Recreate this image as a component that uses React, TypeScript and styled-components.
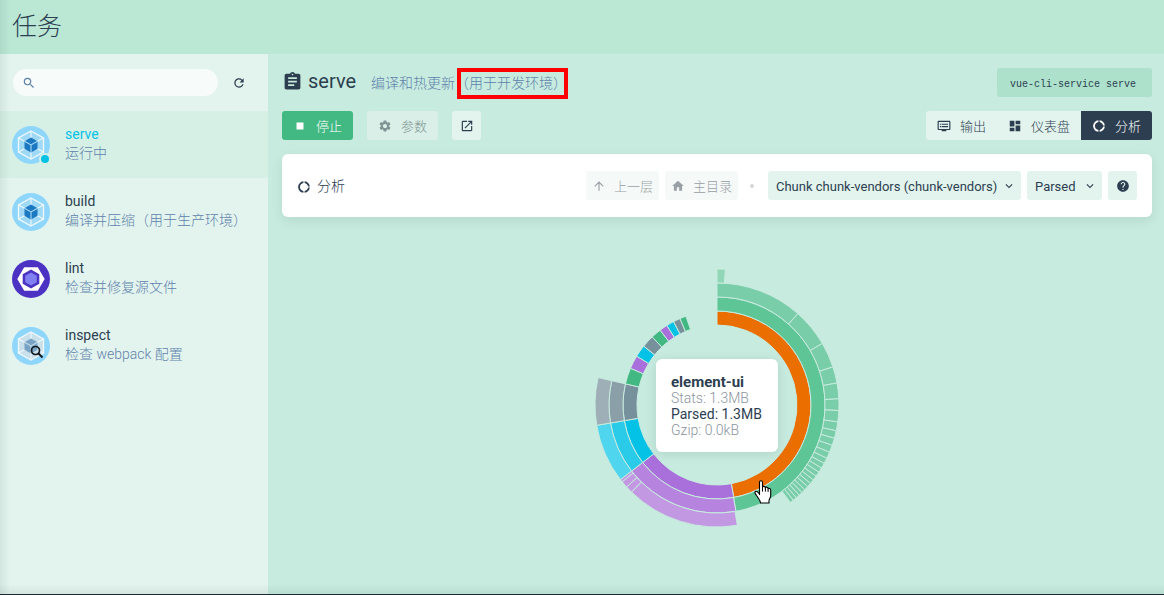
import React from 'react';
import styled, { createGlobalStyle, css } from 'styled-components';
import {
  MdArrowUpward,
  MdAssignment,
  MdDashboard,
  MdDonutLarge,
  MdDvr,
  MdHelp,
  MdHome,
  MdKeyboardArrowDown,
  MdOpenInNew,
  MdRefresh,
  MdSearch,
  MdSettings,
  MdStop,
} from 'react-icons/md';

const color = {
  bg: '#c7ebdf',
  header: '#bbe7d5',
  sidebar: '#e3f4ee',
  selected: '#d7f0e6',
  code: '#ade1cb',
  dark: '#2c3e50',
  muted: '#5f82ac',
  primary: '#42b983',
  accent: '#03c2e6',
};

const GlobalStyle = createGlobalStyle`
  *, *::before, *::after { box-sizing: border-box; }
  body {
    margin: 0;
    background: ${color.bg};
    color: ${color.dark};
    font-family: Roboto, "Noto Sans CJK SC", sans-serif;
    font-size: 14px;
    font-weight: 300;
    line-height: 19px;
  }
  button, input, select { font: inherit; color: inherit; }
`;

const Page = styled.div`
  position: relative;
  display: flex;
  flex-direction: column;
  min-height: 100vh;
  border-bottom: 1px solid #1d2935;

  &::after {
    content: '';
    position: absolute;
    inset: 0;
    pointer-events: none;
    background:
      linear-gradient(to right, rgba(0, 40, 30, 0.07), transparent) left / 10px 100% no-repeat,
      linear-gradient(to top, rgba(0, 40, 30, 0.07), transparent) bottom / 100% 10px no-repeat;
  }
`;

const Header = styled.header`
  height: 54px;
  padding: 0 12px;
  background: ${color.header};
`;

const Title = styled.h1`
  margin: 0;
  font-size: 25px;
  font-weight: 300;
  line-height: 54px;
`;

const Body = styled.div`
  display: flex;
  flex: 1;
`;

const Sidebar = styled.aside`
  flex: 0 0 268px;
  min-width: 0;
  background: ${color.sidebar};
`;

const SearchRow = styled.form`
  display: flex;
  align-items: center;
  gap: 10px;
  height: 57px;
  padding: 0 18px 0 13px;
`;

const SearchField = styled.label`
  display: flex;
  align-items: center;
  flex: 1;
  gap: 6px;
  min-width: 0;
  height: 27px;
  padding: 0 9px;
  border-radius: 14px;
  background: #f7fbfa;
  color: ${color.muted};

  svg { width: 14px; height: 14px; }
`;

const SearchInput = styled.input`
  flex: 1;
  min-width: 0;
  border: 0;
  outline: 0;
  background: transparent;
`;

const RefreshButton = styled.button`
  display: grid;
  place-items: center;
  width: 22px;
  height: 28px;
  padding: 0;
  border: 0;
  background: none;

  svg { width: 14px; height: 14px; }
`;

const TaskList = styled.ul`
  margin: 0;
  padding: 0;
  list-style: none;
`;

const TaskLink = styled.a<{ $active?: boolean }>`
  display: flex;
  align-items: center;
  gap: 15px;
  height: 67px;
  padding: 0 12px;
  color: inherit;
  text-decoration: none;
  background: ${(p) => (p.$active ? color.selected : 'transparent')};
`;

const TaskIcon = styled.span`
  position: relative;
  width: 38px;
  height: 38px;

  svg { display: block; }
`;

const RunningDot = styled.span`
  position: absolute;
  right: -1px;
  bottom: -1px;
  width: 12px;
  height: 12px;
  border: 2px solid ${color.selected};
  border-radius: 50%;
  background: ${color.accent};
`;

const TaskText = styled.span`
  display: flex;
  flex-direction: column;
  padding-bottom: 2px;
`;

const TaskName = styled.span<{ $active?: boolean }>`
  color: ${(p) => (p.$active ? color.accent : color.dark)};
  font-weight: 400;
`;

const TaskInfo = styled.span`
  color: ${color.muted};
`;

const Main = styled.main`
  flex: 1;
  min-width: 0;
  padding: 14px 12px 0 14px;
`;

const Row = styled.div`
  display: flex;
  align-items: center;
  height: 29px;
  margin-bottom: 14px;
`;

const TaskTitle = styled.h2`
  display: flex;
  align-items: center;
  gap: 5px;
  margin: 0 15px 0 0;
  padding-bottom: 2px;
  font-size: 20px;
  font-weight: 400;
  line-height: 27px;

  svg { width: 21px; height: 21px; }
`;

const Description = styled.span`
  flex: 1;
  padding-top: 2px;
  color: ${color.muted};
`;

const Marked = styled.span`
  position: relative;

  &::after {
    content: '';
    position: absolute;
    inset: -7px -1px -8px 2px;
    border: 4px solid #fe0000;
  }
`;

const Command = styled.code`
  padding: 4px 16px 0 13px;
  border-radius: 3px;
  background: ${color.code};
  font-family: "Liberation Mono", monospace;
  font-size: 10px;
  font-weight: 400;
  line-height: 25px;
`;

const tones = {
  primary: css`background: ${color.primary}; color: #fff;`,
  plain: css`background: ${color.sidebar};`,
  dark: css`background: ${color.dark}; color: #fff;`,
  disabled: css`background: #d9efe7; color: #7f9594;`,
  faint: css`background: #f5f9f8; color: #989fa5;`,
};

const Button = styled.button<{ $tone: keyof typeof tones; $tight?: boolean }>`
  display: flex;
  align-items: center;
  justify-content: center;
  gap: ${(p) => (p.$tight ? 8 : 9)}px;
  height: 29px;
  padding: 1px ${(p) => (p.$tight ? 6 : 11)}px 0;
  border: 0;
  border-radius: 3px;
  font-size: 13px;
  white-space: nowrap;
  ${(p) => tones[p.$tone]}

  svg { width: 14px; height: 14px; }
`;

const IconButton = styled(Button)`
  width: 29px;
  padding: 0;
`;

const Actions = styled.div`
  display: flex;
  flex: 1;
  gap: 14px;
`;

const Tabs = styled.div`
  display: flex;
  overflow: hidden;
  border-radius: 3px;

  button { border-radius: 0; }
`;

const Panel = styled.section`
  display: flex;
  align-items: center;
  gap: 6px;
  height: 63px;
  padding: 0 15px;
  border-radius: 6px;
  background: #fff;
  box-shadow: 0 4px 12px rgba(0, 50, 30, 0.09);
`;

const PanelTitle = styled.h3`
  display: flex;
  align-items: center;
  flex: 1;
  gap: 6px;
  margin: 0;
  padding-top: 2px;
  font-size: 14px;
  font-weight: 300;

  svg { width: 14px; height: 14px; }
`;

const Separator = styled.span`
  width: 4px;
  height: 4px;
  margin: 0 8px 0 6px;
  border-radius: 50%;
  background: #d5d8dc;
`;

const SelectBox = styled.span`
  display: grid;
  align-items: center;
  height: 29px;
  border-radius: 3px;
  background: ${color.sidebar};

  select, svg { grid-area: 1 / 1; }
  svg {
    justify-self: end;
    width: 14px;
    height: 14px;
    margin-right: 5px;
    pointer-events: none;
  }
`;

const Select = styled.select<{ $width: number }>`
  appearance: none;
  width: ${(p) => p.$width}px;
  height: 29px;
  padding: 2px 0 0 8px;
  border: 0;
  background: transparent;
  font-size: 13px;
  font-weight: 400;
`;

const Chart = styled.div`
  position: relative;
  width: 272px;
  height: 272px;
  margin: 52px auto 0;

  > svg { display: block; }
`;

const Tooltip = styled.div`
  position: absolute;
  top: 90px;
  left: 75px;
  min-width: 122px;
  padding: 15px 14px 14px 15px;
  border-radius: 6px;
  background: #fff;
  box-shadow: 0 2px 12px rgba(0, 50, 30, 0.12);
  line-height: 16px;
  white-space: nowrap;
`;

const TooltipLine = styled.div<{ $kind?: 'title' | 'current' }>`
  color: ${(p) => (p.$kind ? color.dark : '#8b959e')};
  font-size: ${(p) => (p.$kind === 'title' ? 15 : 14)}px;
  font-weight: ${(p) => (p.$kind === 'title' ? 700 : p.$kind === 'current' ? 400 : 300)};
`;

const Pointer = styled.svg`
  position: absolute;
  top: 211px;
  left: 173px;
`;

const WebpackLogo = ({ faded, lens }: { faded?: boolean; lens?: boolean }) => (
  <svg width="38" height="38" viewBox="0 0 38 38" aria-hidden="true">
    <circle cx="19" cy="19" r="19" fill="#8ed6fb" />
    <path d="M19 5 31.500 12v14L19 33 6.500 26V12Z" fill={faded ? '#c9dfea' : '#9fd9f6'} stroke="#eef8fd" strokeWidth="1.400" />
    <path
      d="M19 5v7M31.500 12 25 15.500M31.500 26 25 22.500M19 33v-7M6.500 26 13 22.500M6.500 12 13 15.500"
      stroke="#eef8fd"
      strokeWidth="1.100"
    />
    <path d="M19 11.500 25.500 15.200v7.500L19 26.500l-6.500-3.800v-7.500Z" fill={faded ? '#78a3c4' : '#1c78c0'} />
    <path d="m12.500 15.200 6.500 3.700 6.500-3.700M19 18.900v7.600" fill="none" stroke={faded ? '#c9dfea' : '#a5daf5'} strokeWidth="1.100" />
    {lens && (
      <g fill="none" stroke="#14191f">
        <circle cx="23.500" cy="23.500" r="4" strokeWidth="1.700" />
        <path d="m26.500 26.500 4 4" strokeWidth="2" />
      </g>
    )}
  </svg>
);

const EslintLogo = () => (
  <svg width="38" height="38" viewBox="0 0 38 38" aria-hidden="true">
    <circle cx="19" cy="19" r="19" fill="#4b32c3" />
    <path d="M12.200 7.200h13.600L32.700 19l-6.900 11.800H12.200L5.300 19Z" fill="#fff" />
    <path d="M19 9.500 27.300 14.200v9.600L19 28.500l-8.300-4.700v-9.600Z" fill="#4b32c3" />
    <path d="M19 12.500 24.800 15.800v6.400L19 25.500l-5.800-3.300v-6.400Z" fill="#8080f2" />
  </svg>
);

const tasks = [
  { name: 'serve', info: '运行中', icon: <WebpackLogo />, active: true },
  { name: 'build', info: '编译并压缩（用于生产环境）', icon: <WebpackLogo /> },
  { name: 'lint', info: '检查并修复源文件', icon: <EslintLogo /> },
  { name: 'inspect', info: '检查 webpack 配置', icon: <WebpackLogo faded lens /> },
];

const point = (r: number, deg: number) => {
  const a = (deg * Math.PI) / 180;
  return `${(136 + r * Math.sin(a)).toFixed(2)} ${(136 - r * Math.cos(a)).toFixed(2)}`;
};

const arc = (ring: number, from: number, to: number) => {
  const inner = 80 + ring * 14;
  const outer = inner + 14;
  const large = to - from > 180 ? 1 : 0;
  return `M${point(outer, from)}A${outer} ${outer} 0 ${large} 1 ${point(outer, to)}L${point(inner, to)}A${inner} ${inner} 0 ${large} 0 ${point(inner, from)}Z`;
};

// Each entry is one run of neighbouring slices: ring, fill, boundary angles.
const slices: [number, string, number[]][] = [
  [0, '#eb6f00', [0, 169.7]],
  [0, '#a96fda', [169.7, 232.3]],
  [0, '#03c2e6', [232.3, 260.4]],
  [0, '#76909c', [260.4, 283]],
  [0, '#42b983', [283, 293]],
  [0, '#a96fda', [293, 301.3]],
  [0, '#03c2e6', [301.3, 308.8]],
  [0, '#76909c', [308.8, 316.4]],
  [0, '#42b983', [316.4, 322.8]],
  [0, '#a96fda', [322.8, 327.8]],
  [0, '#03c2e6', [327.8, 332.5]],
  [0, '#76909c', [332.5, 336.8]],
  [0, '#42b983', [336.8, 340.7]],
  [1, '#5ec596', [0, 169.9]],
  [1, '#b683df', [169.9, 232.3]],
  [1, '#29cbe9', [232.3, 260.4]],
  [1, '#8b9fa9', [260.4, 283]],
  [2, '#79cda8', [0, 41.5, 59.7, 71.8, 79.6, 87.1, 92.6, 98, 102.2, 105.8, 109.3, 112.8, 115.9, 118.6, 121.1, 123.4, 125.7, 127.9, 130, 132, 134, 135.9, 137.7, 139.5, 141.3, 143]],
  [2, '#c398e3', [170.4, 224.5, 227.8, 231, 232.3]],
  [2, '#4fd5ee', [232.3, 260.4]],
  [2, '#9fafb7', [260.4, 283]],
  [3, '#91d7b7', [0, 3.5]],
];

const Sunburst = () => (
  <svg width="272" height="272" viewBox="0 0 272 272" role="img" aria-label="Chunk chunk-vendors">
    {slices.flatMap(([ring, fill, stops]) =>
      stops.slice(1).map((to, i) => (
        <path key={`${ring}-${to}`} d={arc(ring, stops[i], to)} fill={fill} stroke={color.bg} strokeWidth="1" />
      )),
    )}
  </svg>
);

export default function App() {
  return (
    <>
      <GlobalStyle />
      <Page>
        <Header>
          <Title>任务</Title>
        </Header>
        <Body>
          <Sidebar>
            <SearchRow>
              <SearchField>
                <MdSearch />
                <SearchInput type="text" aria-label="搜索" />
              </SearchField>
              <RefreshButton type="button" aria-label="刷新">
                <MdRefresh />
              </RefreshButton>
            </SearchRow>
            <TaskList>
              {tasks.map((task) => (
                <li key={task.name}>
                  <TaskLink href={`#${task.name}`} $active={task.active}>
                    <TaskIcon>
                      {task.icon}
                      {task.active && <RunningDot />}
                    </TaskIcon>
                    <TaskText>
                      <TaskName $active={task.active}>{task.name}</TaskName>
                      <TaskInfo>{task.info}</TaskInfo>
                    </TaskText>
                  </TaskLink>
                </li>
              ))}
            </TaskList>
          </Sidebar>
          <Main>
            <Row>
              <TaskTitle>
                <MdAssignment />
                serve
              </TaskTitle>
              <Description>
                编译和热更新<Marked>（用于开发环境）</Marked>
              </Description>
              <Command>vue-cli-service serve</Command>
            </Row>
            <Row>
              <Actions>
                <Button type="button" $tone="primary">
                  <MdStop />
                  停止
                </Button>
                <Button type="button" $tone="disabled" disabled>
                  <MdSettings />
                  参数
                </Button>
                <IconButton type="button" $tone="plain" aria-label="打开">
                  <MdOpenInNew />
                </IconButton>
              </Actions>
              <Tabs>
                <Button type="button" $tone="plain">
                  <MdDvr />
                  输出
                </Button>
                <Button type="button" $tone="plain">
                  <MdDashboard />
                  仪表盘
                </Button>
                <Button type="button" $tone="dark">
                  <MdDonutLarge />
                  分析
                </Button>
              </Tabs>
            </Row>
            <Panel>
              <PanelTitle>
                <MdDonutLarge />
                分析
              </PanelTitle>
              <Button type="button" $tone="faint" $tight disabled>
                <MdArrowUpward />
                上一层
              </Button>
              <Button type="button" $tone="faint" $tight disabled>
                <MdHome />
                主目录
              </Button>
              <Separator />
              <SelectBox>
                <Select $width={253} aria-label="Chunk">
                  <option>Chunk chunk-vendors (chunk-vendors)</option>
                </Select>
                <MdKeyboardArrowDown />
              </SelectBox>
              <SelectBox>
                <Select $width={75} aria-label="Size">
                  <option>Parsed</option>
                </Select>
                <MdKeyboardArrowDown />
              </SelectBox>
              <IconButton type="button" $tone="plain" aria-label="帮助">
                <MdHelp />
              </IconButton>
            </Panel>
            <Chart>
              <Sunburst />
              <Tooltip role="tooltip">
                <TooltipLine $kind="title">element-ui</TooltipLine>
                <TooltipLine>Stats: 1.3MB</TooltipLine>
                <TooltipLine $kind="current">Parsed: 1.3MB</TooltipLine>
                <TooltipLine>Gzip: 0.0kB</TooltipLine>
              </Tooltip>
              <Pointer width="18" height="24" viewBox="0 0 18 24" aria-hidden="true">
                <path
                  d="M5.500 15V2.200C5.500.2 8.500.2 8.500 2.200V7c.5-1 2.700-.8 2.900.6.700-.8 2.500-.4 2.700.9.900-.6 2.600-.1 2.600 1.500v5.500c0 2.500-1.700 3.500-1.700 5.500v2H6.500c0-2.500-2-4.500-4-7.500-.8-1.300-2-2.500-1.500-3.500.7-1.200 2.500-.7 4.500 2Z"
                  fill="#fff"
                  stroke="#000"
                  strokeWidth="1.100"
                />
                <path d="M8.500 7v4.500M11.400 7.600v4M14.100 8.500v3.500" stroke="#000" />
              </Pointer>
            </Chart>
          </Main>
        </Body>
      </Page>
    </>
  );
}
